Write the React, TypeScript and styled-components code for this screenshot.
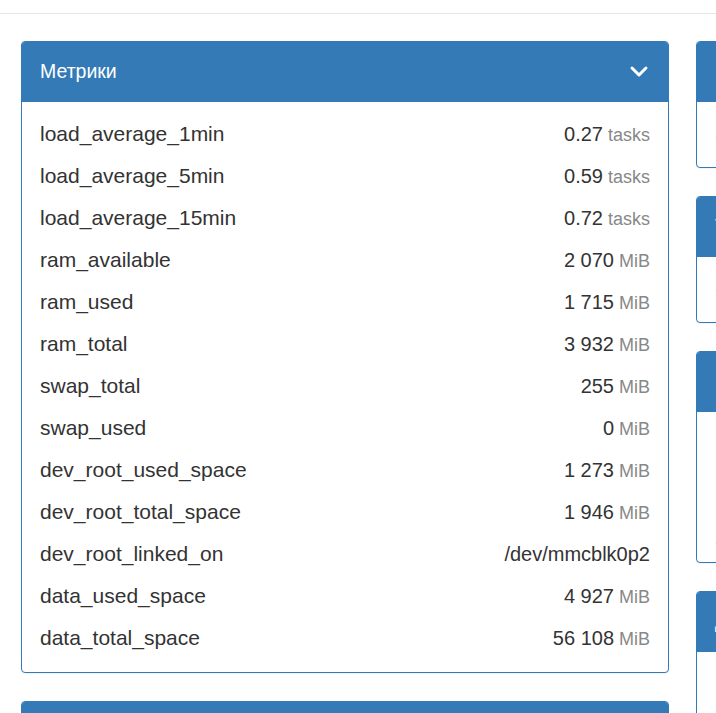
import React from 'react';
import styled, { createGlobalStyle } from 'styled-components';

const GlobalStyle = createGlobalStyle`
  html, body {
    margin: 0;
    padding: 0;
    background: #fff;
    overflow: hidden;
  }
  body {
    font-family: "Liberation Sans", Arial, Helvetica, sans-serif;
    color: #333;
  }
`;

type Metric = {
  name: string;
  value: string;
  unit?: string;
};

const metrics: Metric[] = [
  { name: 'load_average_1min', value: '0.27', unit: 'tasks' },
  { name: 'load_average_5min', value: '0.59', unit: 'tasks' },
  { name: 'load_average_15min', value: '0.72', unit: 'tasks' },
  { name: 'ram_available', value: '2 070', unit: 'MiB' },
  { name: 'ram_used', value: '1 715', unit: 'MiB' },
  { name: 'ram_total', value: '3 932', unit: 'MiB' },
  { name: 'swap_total', value: '255', unit: 'MiB' },
  { name: 'swap_used', value: '0', unit: 'MiB' },
  { name: 'dev_root_used_space', value: '1 273', unit: 'MiB' },
  { name: 'dev_root_total_space', value: '1 946', unit: 'MiB' },
  { name: 'dev_root_linked_on', value: '/dev/mmcblk0p2' },
  { name: 'data_used_space', value: '4 927', unit: 'MiB' },
  { name: 'data_total_space', value: '56 108', unit: 'MiB' },
];

const TopBar = styled.div`
  height: 13px;
  border-bottom: 1px solid #e7e7e7;
`;

const Layout = styled.div`
  display: grid;
  grid-template-columns: 648px 320px;
  column-gap: 27px;
  align-items: start;
  padding: 27px 0 0 21px;
`;

const Column = styled.div`
  display: flex;
  flex-direction: column;
  gap: 28px;
`;

const Panel = styled.section`
  border: 1px solid #337ab7;
  border-radius: 4px;
  background: #fff;
  box-shadow: 0 1px 1px rgba(0, 0, 0, 0.05);
  overflow: hidden;
`;

const PanelHeading = styled.header`
  display: flex;
  align-items: center;
  height: 61px;
  margin: -1px -1px 0;
  padding: 0 20px 0 19px;
  background: #337ab7;
  color: #fff;
`;

const Title = styled.h3`
  flex: 1;
  margin: 0;
  font-size: 19.5px;
  font-weight: normal;
  white-space: nowrap;
`;

const Toggle = styled.button`
  display: flex;
  align-items: center;
  justify-content: center;
  padding: 0;
  border: 0;
  background: none;
  color: #fff;
  cursor: pointer;
`;

const PanelBody = styled.div<{ $minHeight?: number }>`
  padding: 11px 18px 13px 18px;
  min-height: ${(p) => (p.$minHeight ? `${p.$minHeight}px` : 'auto')};
  box-sizing: border-box;
`;

const MetricRow = styled.div`
  display: flex;
  align-items: center;
  justify-content: space-between;
  height: 42px;
`;

const Name = styled.span`
  font-size: 21px;
`;

const Value = styled.span`
  color: #333;
  font-size: 20px;
`;

const Unit = styled.span`
  margin-left: 5px;
  color: #888;
  font-size: 18px;
`;

const Note = styled.div<{ $offset: number }>`
  margin-top: ${(p) => p.$offset}px;
  color: #f0ad4e;
  font-size: 16px;
  line-height: 20px;
  white-space: nowrap;
`;

const Chevron = () => (
  <svg width="20" height="14" viewBox="0 0 20 14" fill="none">
    <polyline
      points="3,3 10,10 17,3"
      stroke="currentColor"
      strokeWidth="3"
      strokeLinecap="round"
      strokeLinejoin="round"
    />
  </svg>
);

const SideCard = ({
  title,
  bodyHeight,
  children,
}: {
  title: string;
  bodyHeight: number;
  children?: React.ReactNode;
}) => (
  <Panel>
    <PanelHeading>
      <Title>{title}</Title>
    </PanelHeading>
    <PanelBody $minHeight={bodyHeight}>{children}</PanelBody>
  </Panel>
);

export default function App() {
  return (
    <>
      <GlobalStyle />
      <TopBar />
      <Layout>
        <Column>
          <Panel>
            <PanelHeading>
              <Title>Метрики</Title>
              <Toggle aria-label="Свернуть">
                <Chevron />
              </Toggle>
            </PanelHeading>
            <PanelBody>
              {metrics.map((m) => (
                <MetricRow key={m.name}>
                  <Name>{m.name}</Name>
                  <span>
                    <Value>{m.value}</Value>
                    {m.unit && <Unit>{m.unit}</Unit>}
                  </span>
                </MetricRow>
              ))}
            </PanelBody>
          </Panel>
          <Panel>
            <PanelHeading>
              <Title>Сеть</Title>
            </PanelHeading>
            <PanelBody $minHeight={120} />
          </Panel>
        </Column>
        <Column>
          <SideCard title="" bodyHeight={65}>
            <Note $offset={10}>⚠ нет данных</Note>
          </SideCard>
          <SideCard title="Температура" bodyHeight={65}>
            <Note $offset={8}>⚠ 2 предупреждения</Note>
          </SideCard>
          <SideCard title="" bodyHeight={149}>
            <Note $offset={106}>⚠ нет данных</Note>
          </SideCard>
          <SideCard title="Диски" bodyHeight={120} />
        </Column>
      </Layout>
    </>
  );
}
